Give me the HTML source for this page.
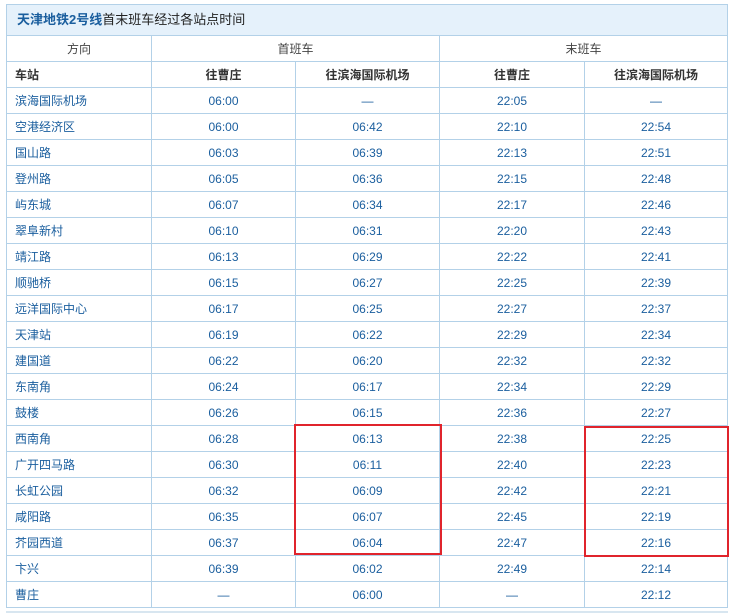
<!DOCTYPE html>
<html><head><meta charset="utf-8"><style>
body{margin:0;background:#fff;font-family:"Liberation Sans","Noto Sans CJK SC",sans-serif;}
.title{position:absolute;left:6px;top:4px;width:720px;height:30px;background:#e5f1fb;border:1px solid #b3d1e8;border-bottom:none;font-size:13px;line-height:30px;color:#222;}
.title b{color:#1a5e9e;margin-left:10px;}
table{position:absolute;left:6px;top:35px;border-collapse:collapse;table-layout:fixed;font-size:12px;}
td{border:1px solid #b3d1e8;height:25px;padding:0;text-align:center;color:#1a5e9e;}
td.s{text-align:left;padding-left:8px;}
tr.h1 td{color:#444;}
tr.h2 td{color:#333;font-weight:bold;}
.red{position:absolute;border:2px solid #e0242c;}
.bl{position:absolute;left:6px;top:611px;width:722px;height:2px;background:#d8e6f0;}
</style></head><body>
<div class="title"><b>天津地铁2号线</b>首末班车经过各站点时间</div>
<table>
<colgroup><col style="width:145px"><col style="width:144px"><col style="width:144px"><col style="width:145px"><col style="width:143px"></colgroup>
<tr class="h1"><td>方向</td><td colspan="2">首班车</td><td colspan="2">末班车</td></tr>
<tr class="h2"><td class="s">车站</td><td>往曹庄</td><td>往滨海国际机场</td><td>往曹庄</td><td>往滨海国际机场</td></tr>
<tr><td class="s">滨海国际机场</td><td>06:00</td><td>—</td><td>22:05</td><td>—</td></tr>
<tr><td class="s">空港经济区</td><td>06:00</td><td>06:42</td><td>22:10</td><td>22:54</td></tr>
<tr><td class="s">国山路</td><td>06:03</td><td>06:39</td><td>22:13</td><td>22:51</td></tr>
<tr><td class="s">登州路</td><td>06:05</td><td>06:36</td><td>22:15</td><td>22:48</td></tr>
<tr><td class="s">屿东城</td><td>06:07</td><td>06:34</td><td>22:17</td><td>22:46</td></tr>
<tr><td class="s">翠阜新村</td><td>06:10</td><td>06:31</td><td>22:20</td><td>22:43</td></tr>
<tr><td class="s">靖江路</td><td>06:13</td><td>06:29</td><td>22:22</td><td>22:41</td></tr>
<tr><td class="s">顺驰桥</td><td>06:15</td><td>06:27</td><td>22:25</td><td>22:39</td></tr>
<tr><td class="s">远洋国际中心</td><td>06:17</td><td>06:25</td><td>22:27</td><td>22:37</td></tr>
<tr><td class="s">天津站</td><td>06:19</td><td>06:22</td><td>22:29</td><td>22:34</td></tr>
<tr><td class="s">建国道</td><td>06:22</td><td>06:20</td><td>22:32</td><td>22:32</td></tr>
<tr><td class="s">东南角</td><td>06:24</td><td>06:17</td><td>22:34</td><td>22:29</td></tr>
<tr><td class="s">鼓楼</td><td>06:26</td><td>06:15</td><td>22:36</td><td>22:27</td></tr>
<tr><td class="s">西南角</td><td>06:28</td><td>06:13</td><td>22:38</td><td>22:25</td></tr>
<tr><td class="s">广开四马路</td><td>06:30</td><td>06:11</td><td>22:40</td><td>22:23</td></tr>
<tr><td class="s">长虹公园</td><td>06:32</td><td>06:09</td><td>22:42</td><td>22:21</td></tr>
<tr><td class="s">咸阳路</td><td>06:35</td><td>06:07</td><td>22:45</td><td>22:19</td></tr>
<tr><td class="s">芥园西道</td><td>06:37</td><td>06:04</td><td>22:47</td><td>22:16</td></tr>
<tr><td class="s">卞兴</td><td>06:39</td><td>06:02</td><td>22:49</td><td>22:14</td></tr>
<tr><td class="s">曹庄</td><td>—</td><td>06:00</td><td>—</td><td>22:12</td></tr>
</table>
<div class="red" style="left:294px;top:424px;width:144px;height:127px;"></div>
<div class="red" style="left:584px;top:426px;width:141px;height:127px;"></div>
<div class="bl"></div>
</body></html>
